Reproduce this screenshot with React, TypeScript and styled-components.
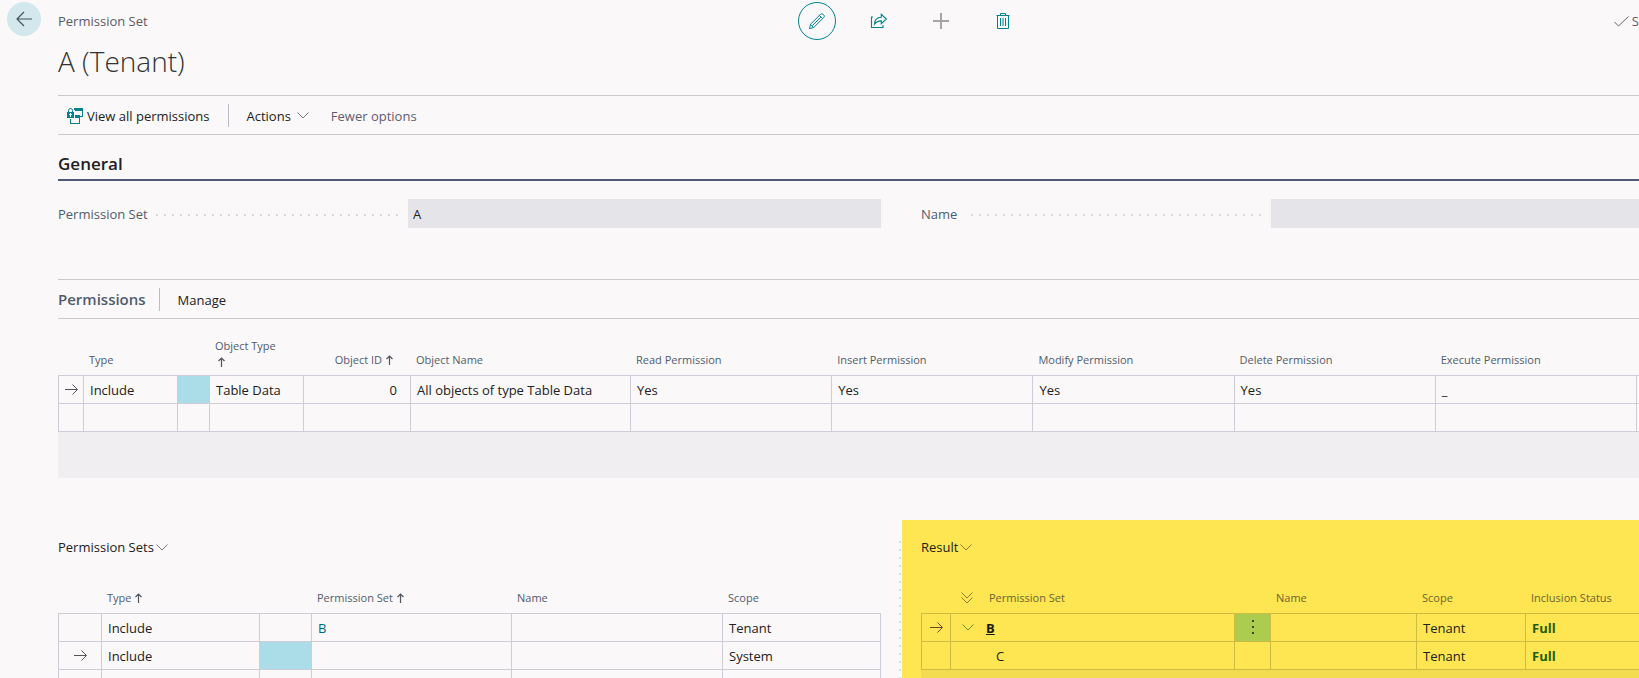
import React from "react";
import styled, { createGlobalStyle, css } from "styled-components";

const ink = "#212121";
const muted = "#505c6d";
const teal = "#00838f";
const line = "#cfccd6";
const surface = "#faf8f9";

const GlobalStyle = createGlobalStyle`
  *, *::before, *::after { box-sizing: border-box; }
  html, body { margin: 0; background: ${surface}; }
  body {
    color: ${ink};
    font-family: "Open Sans", "Noto Sans", sans-serif;
    font-size: 13px;
    line-height: 20px;
  }
  button, input {
    font: inherit;
    color: inherit;
    border: 0;
    padding: 0;
    background: none;
  }
  button { cursor: pointer; white-space: nowrap; }
  svg { display: block; flex: none; }
`;

const Page = styled.main`
  height: 100vh;
  overflow: hidden;
  display: flex;
  flex-direction: column;
`;

const TopBar = styled.header`
  display: grid;
  grid-template-columns: 798fr auto 617fr;
  align-items: center;
  padding-top: 2px;
  height: 40px;
`;

const TopLeft = styled.div`
  display: flex;
  align-items: flex-start;
  gap: 17px;
  padding-left: 7px;
  height: 38px;
`;

const BackButton = styled.button`
  width: 34px;
  height: 34px;
  border-radius: 50%;
  background: #d3e8ec;
  display: grid;
  place-items: center;
`;

const Caption = styled.span`
  color: #5b5a68;
  padding-top: 9px;
`;

const Tools = styled.div`
  display: flex;
  gap: 24px;
`;

const ToolButton = styled.button<{ $ringed?: boolean }>`
  width: 38px;
  height: 38px;
  border-radius: 50%;
  border: 1px solid ${(p) => (p.$ringed ? teal : "transparent")};
  display: grid;
  place-items: center;
`;

const Status = styled.div`
  display: flex;
  justify-content: flex-end;
  align-items: center;
  gap: 3px;
  color: #5b5a78;
`;

const Content = styled.div`
  padding-left: 58px;
  flex: 1;
`;

const Title = styled.h1`
  margin: 0;
  height: 55px;
  font-size: 28px;
  line-height: 42px;
  font-weight: 300;
  color: #333;
`;

const ActionBar = styled.div<{ $indent?: boolean }>`
  display: flex;
  align-items: center;
  height: 40px;
  border-top: 1px solid #cbc9cd;
  border-bottom: 1px solid #cbc9cd;
  padding-left: ${(p) => (p.$indent ? 9 : 0)}px;
`;

const Action = styled.button<{ $muted?: boolean; $gap?: number }>`
  display: flex;
  align-items: center;
  gap: ${(p) => p.$gap ?? 4}px;
  padding-top: 1px;
  color: ${(p) => (p.$muted ? "#5f5c72" : ink)};
`;

const Divider = styled.span<{ $before: number }>`
  width: 1px;
  height: 23px;
  background: #bdbbc6;
  margin: 0 18px 0 ${(p) => p.$before}px;
`;

const Spacer = styled.span`
  width: 22px;
`;

const GroupHeading = styled.h2`
  margin: 0;
  padding-top: 17px;
  height: 46px;
  border-bottom: 2px solid #4f5b72;
  font-size: 17px;
  line-height: 24px;
  font-weight: 600;
`;

const Columns = styled.div`
  display: grid;
  grid-template-columns: 823fr 718fr;
  column-gap: 40px;
  padding-top: 18px;
  height: 98px;
`;

const Field = styled.div`
  display: grid;
  grid-template-columns: 350px 1fr;
  height: 29px;
`;

const FieldLabel = styled.label`
  display: flex;
  align-items: center;
  gap: 8px;
  padding-right: 10px;
  color: ${muted};
  white-space: nowrap;

  &::after {
    content: "";
    flex: 1;
    height: 2px;
    margin-top: 2px;
    background: repeating-linear-gradient(to left, #dbd9dd 0 2px, transparent 2px 8px);
  }
`;

const FieldInput = styled.input`
  width: 100%;
  min-width: 0;
  background: #e5e4e9;
  padding-left: 5px;
`;

const PartTitle = styled.h2`
  margin: 0;
  font-size: 15px;
  line-height: 20px;
  font-weight: 600;
  color: ${muted};
`;

type Tone = "plain" | "yellow";

const Grid = styled.table<{ $tone?: Tone }>`
  --grid-line: ${(p) => (p.$tone === "yellow" ? "#cfbb42" : line)};
  width: 100%;
  table-layout: fixed;
  border-collapse: separate;
  border-spacing: 0;
`;

const HeadCell = styled.th<{ $tone?: Tone; $tall?: boolean; $right?: boolean }>`
  height: ${(p) => (p.$tall ? 57 : 44)}px;
  padding: 0 6px 8px;
  vertical-align: bottom;
  text-align: left;
  font-size: 11px;
  line-height: 14px;
  font-weight: 400;
  white-space: nowrap;
  color: ${(p) => (p.$tone === "yellow" ? "#6b6434" : muted)};
  border-bottom: 1px solid var(--grid-line);
  ${(p) => p.$right && css`padding-right: 17px;`}
`;

const HeadLabel = styled.span<{ $right?: boolean; $stacked?: boolean }>`
  display: flex;
  flex-direction: ${(p) => (p.$stacked ? "column" : "row")};
  align-items: ${(p) => (p.$stacked ? "flex-start" : "center")};
  justify-content: ${(p) => (p.$right ? "flex-end" : "flex-start")};
  gap: 4px;

  svg {
    margin-left: ${(p) => (p.$stacked ? 3 : 0)}px;
  }
`;

const Cell = styled.td<{ $right?: boolean; $fill?: string; $last?: boolean }>`
  height: 28px;
  padding: 0 6px;
  border-left: 1px solid var(--grid-line);
  border-bottom: 1px solid var(--grid-line);
  line-height: 20px;
  white-space: nowrap;
  overflow: hidden;
  background: ${(p) => p.$fill ?? "transparent"};
  ${(p) => p.$right && css`text-align: right; padding-right: 13px;`}
  ${(p) => p.$last && css`border-right: 1px solid var(--grid-line);`}
`;

const MarkerCell = styled(Cell)`
  padding: 0;
  svg { margin: 0 auto; }
`;

const TreeCell = styled.div<{ $depth: number }>`
  display: flex;
  align-items: center;
  gap: 12px;
  padding-left: ${(p) => (p.$depth ? 39 : 5)}px;
`;

const TreeHead = styled.span`
  display: flex;
  align-items: center;
  gap: 16px;
  padding-left: 5px;
`;

const SetLink = styled.a<{ $strong?: boolean }>`
  color: ${(p) => (p.$strong ? "#1c1a08" : "#00687a")};
  font-weight: ${(p) => (p.$strong ? 700 : 400)};
  text-decoration: ${(p) => (p.$strong ? "underline" : "none")};
`;

const StatusText = styled.strong`
  color: #1d5c0a;
  font-weight: 700;
`;

const MenuButton = styled.button`
  display: block;
  margin: 0 auto;
`;

const EmptyBand = styled.div`
  height: 46px;
  background: #f0eef1;
`;

const Lower = styled.div`
  display: grid;
  grid-template-columns: 823fr 17px 4px 737fr;
  padding-top: 42px;
`;

const SetsPane = styled.section`
  padding-top: 17px;
`;

const DotRule = styled.div`
  grid-column: 3;
  width: 2px;
  margin: 21px 0 0 1px;
  background: repeating-linear-gradient(to bottom, #dbd9dd 0 2px, transparent 2px 8px);
`;

const ResultPane = styled.section`
  background: #fde651;
  padding: 17px 0 0 19px;
`;

const ResultFoot = styled.div`
  height: 32px;
  background: #f4dc50;
`;

const PaneTitle = styled.button`
  display: flex;
  align-items: center;
  gap: 2px;
  height: 33px;
  padding-bottom: 13px;
`;

const BackArrow = () => (
  <svg width="16" height="16" viewBox="0 0 16 16" fill="none" stroke="#45525a" strokeWidth="1.2">
    <path d="M16 8H1M8 1L1 8l7 7" />
  </svg>
);

const PencilIcon = () => (
  <svg width="16" height="16" viewBox="0 0 16 16" fill="none" stroke={teal} strokeWidth="1">
    <path d="M0.500 15.500l1-4.200L11.600 1.200a1.700 1.700 0 0 1 2.300 0l0.900 0.900a1.700 1.700 0 0 1 0 2.300L4.700 14.500z" />
    <path d="M1.500 11.300l3.200 3.200M10.400 2.400l3.200 3.200M3.400 12.600l8.400-8.400" />
  </svg>
);

const ShareIcon = () => (
  <svg width="18" height="16" viewBox="0 0 18 16" fill="none" stroke={teal} strokeWidth="1.1">
    <path d="M3 4H1.500v10.500h11.500V12" />
    <path d="M4.500 11.200C4.600 6.800 7 4.300 11.300 4.200V1.300l5 4.700-5 4.700V7.900C8.300 7.800 6.300 8.800 4.500 11.200z" />
  </svg>
);

const PlusIcon = () => (
  <svg width="16" height="16" viewBox="0 0 16 16" stroke="#a5a4a6" strokeWidth="2">
    <path d="M8 0v16M0 8h16" />
  </svg>
);

const TrashIcon = () => (
  <svg width="14" height="16" viewBox="0 0 14 16" fill="none" stroke={teal} strokeWidth="1">
    <path d="M0.500 2.500h13M4.500 2.500V0.500h5v2M1.500 2.500v13h11V2.500M4.500 5v8M7 5v8M9.500 5v8" />
  </svg>
);

const CheckIcon = () => (
  <svg width="15" height="11" viewBox="0 0 15 11" fill="none" stroke="#66646c" strokeWidth="1">
    <path d="M0.500 6l4 4L14.500 0.500" />
  </svg>
);

const PermissionsIcon = () => (
  <svg width="16" height="16" viewBox="0 0 16 16" fill={teal}>
    <path d="M7 0h9v9h-3V8h2V3H8V2H7z" />
    <path d="M8 7h5v9H3v-5h1v4h8v-5H8z" />
    <path d="M0 4h7v6H0z" />
    <path d="M1.500 4.500V2.500a2 2 0 0 1 4 0v2" fill="none" stroke={teal} />
    <path d="M3 5h1v4H3zM2 6h3v1H2z" fill="#fff" />
  </svg>
);

const Chevron = ({ color = "#77757c" }: { color?: string }) => (
  <svg width="12" height="7" viewBox="0 0 12 7" fill="none" stroke={color}>
    <path d="M0.500 0.500L6 6l5.500-5.500" />
  </svg>
);

const DoubleChevron = () => (
  <svg width="12" height="12" viewBox="0 0 12 12" fill="none" stroke="#8c7f33">
    <path d="M0.500 0.500L6 6l5.500-5.500M0.500 5.500L6 11l5.500-5.500" />
  </svg>
);

const RowArrow = ({ color = "#55535a" }: { color?: string }) => (
  <svg width="13" height="11" viewBox="0 0 13 11" fill="none" stroke={color}>
    <path d="M0 5.500h12M7.500 0.500l5 5-5 5" />
  </svg>
);

const SortArrow = () => (
  <svg width="7" height="10" viewBox="0 0 7 10" fill="none" stroke="#505560" strokeWidth="1.200">
    <path d="M3.500 10V1M0.500 4l3-3 3 3" />
  </svg>
);

const DotsIcon = () => (
  <svg width="2" height="15" viewBox="0 0 2 15" fill="#3c4416">
    <path d="M0 0h2v2H0zM0 6h2v2H0zM0 12h2v2H0z" />
  </svg>
);

const rights = ["Read Permission", "Insert Permission", "Modify Permission", "Delete Permission", "Execute Permission"];
const blankCells = Array.from({ length: 12 }, (_, i) => i);

const PermissionsTable = () => (
  <Grid aria-label="Permissions">
    <colgroup>
      {[25, 94, 32, 94, 107, 220].map((w, i) => (
        <col key={i} width={w} />
      ))}
      {rights.map((r) => (
        <col key={r} />
      ))}
      <col width={3} />
    </colgroup>
    <thead>
      <tr>
        <HeadCell $tall />
        <HeadCell $tall scope="col">Type</HeadCell>
        <HeadCell $tall />
        <HeadCell $tall scope="col">
          <HeadLabel $stacked>
            Object Type
            <SortArrow />
          </HeadLabel>
        </HeadCell>
        <HeadCell $tall $right scope="col">
          <HeadLabel $right>
            Object ID
            <SortArrow />
          </HeadLabel>
        </HeadCell>
        <HeadCell $tall scope="col">Object Name</HeadCell>
        {rights.map((r) => (
          <HeadCell $tall scope="col" key={r}>{r}</HeadCell>
        ))}
        <MarkerHead />
      </tr>
    </thead>
    <tbody>
      <tr>
        <MarkerCell><RowArrow /></MarkerCell>
        <Cell>Include</Cell>
        <Cell $fill="#aadde7" />
        <Cell>Table Data</Cell>
        <Cell $right>0</Cell>
        <Cell>All objects of type Table Data</Cell>
        <Cell>Yes</Cell>
        <Cell>Yes</Cell>
        <Cell>Yes</Cell>
        <Cell>Yes</Cell>
        <Cell>_</Cell>
        <MarkerCell />
      </tr>
      <tr>
        {blankCells.map((i) => (
          <MarkerCell key={i} />
        ))}
      </tr>
    </tbody>
  </Grid>
);

const MarkerHead = styled(HeadCell)`
  padding: 0;
`;

const setRows = [
  { current: false, type: "Include", set: "B", scope: "Tenant" },
  { current: true, type: "Include", set: "", scope: "System" },
  { current: false, type: "", set: "", scope: "" },
];

const SetsTable = () => (
  <Grid aria-label="Permission Sets">
    <colgroup>
      <col width={43} />
      <col width={158} />
      <col width={52} />
      <col width={200} />
      <col />
      <col width={159} />
    </colgroup>
    <thead>
      <tr>
        <HeadCell />
        <HeadCell scope="col"><HeadLabel>Type <SortArrow /></HeadLabel></HeadCell>
        <HeadCell />
        <HeadCell scope="col"><HeadLabel>Permission Set <SortArrow /></HeadLabel></HeadCell>
        <HeadCell scope="col">Name</HeadCell>
        <HeadCell scope="col">Scope</HeadCell>
      </tr>
    </thead>
    <tbody>
      {setRows.map((r, i) => (
        <tr key={i}>
          <MarkerCell>{r.current && <RowArrow />}</MarkerCell>
          <Cell>{r.type}</Cell>
          <Cell $fill={r.current ? "#aadde7" : undefined} />
          <Cell>{r.set && <SetLink href="#set-b">{r.set}</SetLink>}</Cell>
          <Cell />
          <Cell $last>{r.scope}</Cell>
        </tr>
      ))}
    </tbody>
  </Grid>
);

const ResultTable = () => (
  <Grid $tone="yellow" aria-label="Result">
    <colgroup>
      <col width={29} />
      <col />
      <col width={36} />
      <col width={146} />
      <col width={109} />
      <col width={114} />
    </colgroup>
    <thead>
      <tr>
        <HeadCell $tone="yellow" />
        <HeadCell $tone="yellow" scope="col">
          <TreeHead><DoubleChevron />Permission Set</TreeHead>
        </HeadCell>
        <HeadCell $tone="yellow" />
        <HeadCell $tone="yellow" scope="col">Name</HeadCell>
        <HeadCell $tone="yellow" scope="col">Scope</HeadCell>
        <HeadCell $tone="yellow" scope="col">Inclusion Status</HeadCell>
      </tr>
    </thead>
    <tbody>
      <tr>
        <MarkerCell><RowArrow color="#6b4a17" /></MarkerCell>
        <Cell>
          <TreeCell $depth={0}>
            <Chevron color="#6b8a35" />
            <SetLink $strong href="#result-b">B</SetLink>
          </TreeCell>
        </Cell>
        <MarkerCell $fill="#abcc4f">
          <MenuButton aria-label="Show more options"><DotsIcon /></MenuButton>
        </MarkerCell>
        <Cell />
        <Cell>Tenant</Cell>
        <Cell><StatusText>Full</StatusText></Cell>
      </tr>
      <tr>
        <MarkerCell />
        <Cell><TreeCell $depth={1}>C</TreeCell></Cell>
        <MarkerCell />
        <Cell />
        <Cell>Tenant</Cell>
        <Cell><StatusText>Full</StatusText></Cell>
      </tr>
    </tbody>
  </Grid>
);

export default function App() {
  return (
    <Page>
      <GlobalStyle />
      <TopBar>
        <TopLeft>
          <BackButton aria-label="Back"><BackArrow /></BackButton>
          <Caption>Permission Set</Caption>
        </TopLeft>
        <Tools>
          <ToolButton $ringed aria-label="Edit"><PencilIcon /></ToolButton>
          <ToolButton aria-label="Share"><ShareIcon /></ToolButton>
          <ToolButton aria-label="New"><PlusIcon /></ToolButton>
          <ToolButton aria-label="Delete"><TrashIcon /></ToolButton>
        </Tools>
        <Status><CheckIcon />S</Status>
      </TopBar>
      <Content>
        <Title>A (Tenant)</Title>
        <ActionBar $indent>
          <Action><PermissionsIcon />View all permissions</Action>
          <Divider $before={18} />
          <Action $gap={6}>Actions<Chevron /></Action>
          <Spacer />
          <Action $muted>Fewer options</Action>
        </ActionBar>
        <GroupHeading>General</GroupHeading>
        <Columns>
          <Field>
            <FieldLabel htmlFor="set-id">Permission Set</FieldLabel>
            <FieldInput id="set-id" defaultValue="A" readOnly />
          </Field>
          <Field>
            <FieldLabel htmlFor="set-name">Name</FieldLabel>
            <FieldInput id="set-name" defaultValue="" readOnly />
          </Field>
        </Columns>
        <ActionBar>
          <PartTitle>Permissions</PartTitle>
          <Divider $before={13} />
          <Action>Manage</Action>
        </ActionBar>
        <PermissionsTable />
        <EmptyBand />
        <Lower>
          <SetsPane>
            <PaneTitle>Permission Sets<Chevron /></PaneTitle>
            <SetsTable />
          </SetsPane>
          <DotRule />
          <ResultPane>
            <PaneTitle>Result<Chevron color="#8c7f33" /></PaneTitle>
            <ResultTable />
            <ResultFoot />
          </ResultPane>
        </Lower>
      </Content>
    </Page>
  );
}
